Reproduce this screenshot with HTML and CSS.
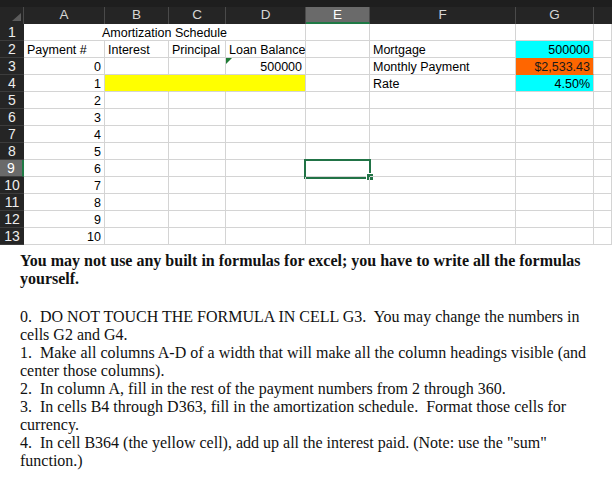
FILE: index.html
```html
<!DOCTYPE html>
<html>
<head>
<meta charset="utf-8">
<link rel="stylesheet" href="styles.css">
</head>
<body>
<div class="sheet">
  <div class="topbar"></div>
  <div class="grid">
    <div class="corner"><span class="tri"></span></div>
    <div class="ch">A</div>
    <div class="ch">B</div>
    <div class="ch">C</div>
    <div class="ch">D</div>
    <div class="ch sel">E</div>
    <div class="ch">F</div>
    <div class="ch">G</div>
    <div class="ch end"></div>

    <div class="rh">1</div>
    <div class="c merge">Amortization Schedule</div>
    <div class="c"></div><div class="c"></div><div class="c"></div><div class="c"></div>

    <div class="rh">2</div>
    <div class="c">Payment #</div>
    <div class="c">Interest</div>
    <div class="c">Principal</div>
    <div class="c">Loan Balance</div>
    <div class="c"></div>
    <div class="c">Mortgage</div>
    <div class="c num cyan">500000</div>
    <div class="c"></div>

    <div class="rh">3</div>
    <div class="c num">0</div>
    <div class="c"></div>
    <div class="c"></div>
    <div class="c num flagged"><span class="flag"></span>500000</div>
    <div class="c"></div>
    <div class="c">Monthly Payment</div>
    <div class="c num orange">$2,533.43</div>
    <div class="c"></div>

    <div class="rh">4</div>
    <div class="c num">1</div>
    <div class="c yellow inner"></div>
    <div class="c yellow inner"></div>
    <div class="c yellow"></div>
    <div class="c"></div>
    <div class="c">Rate</div>
    <div class="c num cyan last">4.50%</div>
    <div class="c"></div>

    <div class="rh">5</div><div class="c num">2</div><div class="c"></div><div class="c"></div><div class="c"></div><div class="c"></div><div class="c"></div><div class="c"></div><div class="c"></div>
    <div class="rh">6</div><div class="c num">3</div><div class="c"></div><div class="c"></div><div class="c"></div><div class="c"></div><div class="c"></div><div class="c"></div><div class="c"></div>
    <div class="rh">7</div><div class="c num">4</div><div class="c"></div><div class="c"></div><div class="c"></div><div class="c"></div><div class="c"></div><div class="c"></div><div class="c"></div>
    <div class="rh">8</div><div class="c num">5</div><div class="c"></div><div class="c"></div><div class="c"></div><div class="c"></div><div class="c"></div><div class="c"></div><div class="c"></div>
    <div class="rh selrow">9</div><div class="c num">6</div><div class="c"></div><div class="c"></div><div class="c"></div><div class="c active"><span class="cursor"></span><span class="handle"></span></div><div class="c"></div><div class="c"></div><div class="c"></div>
    <div class="rh">10</div><div class="c num">7</div><div class="c"></div><div class="c"></div><div class="c"></div><div class="c"></div><div class="c"></div><div class="c"></div><div class="c"></div>
    <div class="rh">11</div><div class="c num">8</div><div class="c"></div><div class="c"></div><div class="c"></div><div class="c"></div><div class="c"></div><div class="c"></div><div class="c"></div>
    <div class="rh">12</div><div class="c num">9</div><div class="c"></div><div class="c"></div><div class="c"></div><div class="c"></div><div class="c"></div><div class="c"></div><div class="c"></div>
    <div class="rh">13</div><div class="c num">10</div><div class="c"></div><div class="c"></div><div class="c"></div><div class="c"></div><div class="c"></div><div class="c"></div><div class="c"></div>
  </div>
</div>
<div class="notes">
  <p class="bold"><span class="ln">You may not use any built in formulas for excel; you have to write all the formulas</span><span class="ln">yourself.</span></p>
  <p class="list"><span class="ln">0.&nbsp; DO NOT TOUCH THE FORMULA IN CELL G3.&nbsp; You may change the numbers in</span><span class="ln">cells G2 and G4.</span><span class="ln">1.&nbsp; Make all columns A-D of a width that will make all the column headings visible (and</span><span class="ln">center those columns).</span><span class="ln">2.&nbsp; In column A, fill in the rest of the payment numbers from 2 through 360.</span><span class="ln">3.&nbsp; In cells B4 through D363, fill in the amortization schedule.&nbsp; Format those cells for</span><span class="ln">currency.</span><span class="ln">4.&nbsp; In cell B364 (the yellow cell), add up all the interest paid. (Note: use the "sum"</span><span class="ln">function.)</span></p>
</div>
</body>
</html>
```
FILE: styles.css
```css
html, body {
  margin: 0;
  padding: 0;
  background: #ffffff;
}
.sheet {
  width: 612px;
  overflow: hidden;
}
.topbar {
  height: 7px;
  background: #1e1e1e;
}
.grid {
  display: grid;
  grid-template-columns: 24px 81px 64px 57px 80px 64px 146px 78px 1fr;
  grid-auto-rows: 17px;
  font-family: "Liberation Sans", Arial, sans-serif;
  font-size: 12.5px;
}
.corner {
  position: relative;
  background: #252525;
  border-right: 1px solid #4a4a4a;
  box-sizing: border-box;
}
.tri {
  position: absolute;
  right: 2px;
  bottom: 3px;
  width: 0;
  height: 0;
  border-bottom: 8px solid #5c5c5c;
  border-left: 9px solid transparent;
}
.ch {
  background: #252525;
  color: #d6d6d6;
  text-align: center;
  line-height: 16px;
  font-size: 13.5px;
  border-right: 1px solid #4a4a4a;
  box-sizing: border-box;
}
.ch.end { border-right: none; }
.ch.sel {
  background: #6a6a6a;
  color: #ffffff;
  border-bottom: 2px solid #1f7a45;
  line-height: 15px;
}
.rh {
  background: #252525;
  color: #ececec;
  text-align: center;
  line-height: 17px;
  font-size: 14px;
  border-bottom: 1px solid #3c3c3c;
  box-sizing: border-box;
}
.rh.selrow {
  background: #6a6a6a;
  color: #ffffff;
  border-right: 2px solid #1f7a45;
}
.c {
  position: relative;
  border-right: 1px solid #d4d4d4;
  border-bottom: 1px solid #d4d4d4;
  box-sizing: border-box;
  padding: 1px 3px 0 3px;
  line-height: 16px;
  white-space: nowrap;
  color: #000000;
}
.merge {
  grid-column: span 4;
  text-align: center;
}
.num { text-align: right; }
.cyan {
  background: #00ffff;
  border-bottom-color: #00ffff;
}
.cyan.last { border-bottom-color: #d4d4d4; }
.orange {
  background: #ff6600;
  border-bottom-color: #ff6600;
  color: #1a1a1a;
}
.yellow { background: #ffff00; }
.yellow.inner { border-right-color: #ffff00; }
.flag {
  position: absolute;
  left: 0;
  top: 0;
  width: 0;
  height: 0;
  border-top: 6px solid #1e7b34;
  border-right: 6px solid transparent;
}
.cursor {
  position: absolute;
  left: -2px;
  top: -1px;
  width: 67px;
  height: 20px;
  border: 2px solid #217346;
  box-sizing: border-box;
}
.handle {
  position: absolute;
  left: 60px;
  top: 13px;
  width: 6px;
  height: 6px;
  background: #217346;
  border-left: 1px solid #ffffff;
  border-top: 1px solid #ffffff;
}
.notes {
  margin-top: 7px;
  padding-left: 20px;
  font-family: "Liberation Serif", "Times New Roman", serif;
  font-size: 16px;
  line-height: 18px;
  color: #111111;
}
.notes p {
  margin: 0;
}
.notes .bold {
  font-weight: bold;
}
.notes .list {
  margin-top: 20px;
}
.ln {
  display: block;
  white-space: nowrap;
}
```
